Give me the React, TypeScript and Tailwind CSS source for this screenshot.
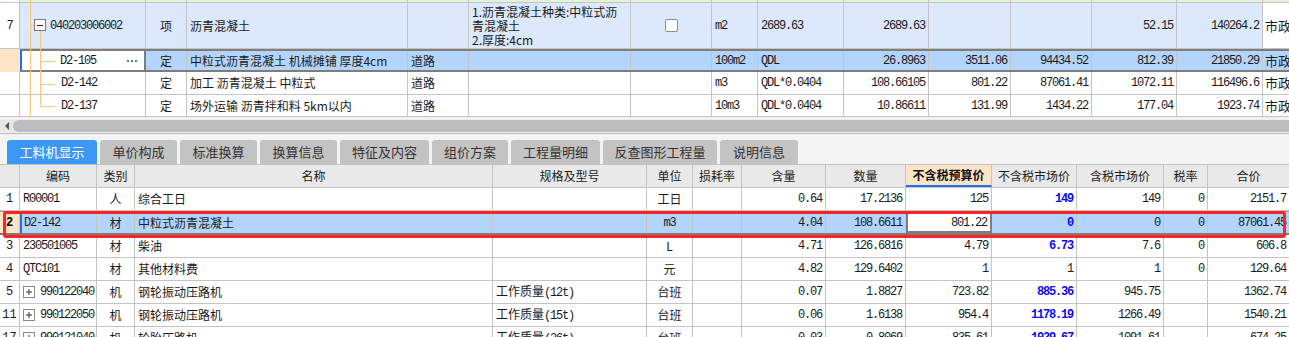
import React from "react";
import clsx from "clsx";
import { twMerge } from "tailwind-merge";

const cjk = "font-['Noto_Sans_CJK_SC',sans-serif] text-[12px]";
const mono = "font-['Liberation_Mono','Noto_Sans_CJK_SC',monospace] text-[12px] tracking-[-1.2px]";

// top grid column widths
const TW = [
  "w-[20px]", "w-[126px]", "w-[41px]", "w-[221px]", "w-[61px]", "w-[162px]", "w-[81px]",
  "w-[46px]", "w-[86px]", "w-[85px]", "w-[82px]", "w-[81px]", "w-[85px]", "w-[86px]", "w-[40px]",
];

// bottom grid column widths
const BW = [
  "w-[20px]", "w-[77px]", "w-[38px]", "w-[358px]", "w-[154px]", "w-[46px]", "w-[49px]",
  "w-[84px]", "w-[80px]", "w-[86px]", "w-[85px]", "w-[87px]", "w-[44px]", "w-[81px]",
];

function Cell({
  w,
  children,
  cls = "",
  num = false,
}: {
  w: string;
  children?: React.ReactNode;
  cls?: string;
  num?: boolean;
}) {
  return (
    <div
      className={twMerge(
        clsx(
          "shrink-0 h-full flex items-center border-r border-[#c4c4c4] overflow-hidden whitespace-nowrap text-[#1a1a1a]",
          w,
          num ? mono : cjk,
          cls
        )
      )}
    >
      {children}
    </div>
  );
}

const L = "pl-[3px]";
const R = "justify-end pr-[3px]";
const C = "justify-center";

function Dots() {
  return (
    <span className="flex gap-[2px] ml-auto mr-[7px]">
      <span className="w-[2px] h-[2px] bg-[#3b82d6]" />
      <span className="w-[2px] h-[2px] bg-[#3b82d6]" />
      <span className="w-[2px] h-[2px] bg-[#3b82d6]" />
    </span>
  );
}

function PlusBox() {
  return (
    <svg width="12" height="12" viewBox="0 0 12 12" className="mr-[5px] shrink-0">
      <rect x="0.5" y="0.5" width="11" height="11" fill="#fff" stroke="#8a8a8a" />
      <path d="M3 6h6M6 3v6" stroke="#333" strokeWidth="1" />
    </svg>
  );
}

function TreeLines() {
  return (
    <svg
      width="126"
      height="117"
      viewBox="0 0 126 117"
      className="absolute left-[20px] top-0 pointer-events-none"
    >
      <g stroke="#f8c67c" strokeWidth="1" fill="none">
        <path d="M10.5 0V117" />
        <path d="M20.5 31V106.5" />
        <path d="M10 25.5H14" />
        <path d="M20 61.5H35" />
        <path d="M20 84.5H35" />
        <path d="M20 106.5H35" />
      </g>
      <rect x="14.5" y="19.5" width="11" height="11" fill="#fff" stroke="#7a7a7a" />
      <path d="M17 25.5H23" stroke="#222" strokeWidth="1" />
    </svg>
  );
}

function TopTable() {
  const plain = [
    {
      code: "D2-142",
      name: "加工 沥青混凝土 中粒式",
      unit: "m3",
      expr: "QDL*0.0404",
      v: ["108.66105", "801.22", "87061.41", "1072.11", "116496.6"],
      h: "h-[23px]",
    },
    {
      code: "D2-137",
      name: "场外运输 沥青拌和料 5km以内",
      unit: "10m3",
      expr: "QDL*0.0404",
      v: ["10.86611", "131.99", "1434.22", "177.04", "1923.74"],
      h: "h-[22px]",
    },
  ];
  return (
    <div className="relative">
      {/* strip of the row above */}
      <div className="flex h-[3px] bg-[#e4f2d8] border-b border-[#c4c4c4]">
        {TW.map((w, i) => (
          <Cell key={i} w={w} cls={i === 0 ? "bg-white" : ""} />
        ))}
      </div>

      {/* row 7 */}
      <div className="flex h-[46px] bg-[#dce8fb] border-b border-[#c4c4c4]">
        <Cell w={TW[0]} num cls={clsx(C, "bg-white")}>7</Cell>
        <Cell w={TW[1]} num cls="pl-[30px]">040203006002</Cell>
        <Cell w={TW[2]} cls={C}>项</Cell>
        <Cell w={TW[3]} cls={L}>沥青混凝土</Cell>
        <Cell w={TW[4]} />
        <Cell w={TW[5]} cls={clsx(L, "whitespace-normal leading-[14px]")}>
          <span>
            1.沥青混凝土种类:中粒式沥
            <br />
            青混凝土
            <br />
            2.厚度:4cm
          </span>
        </Cell>
        <Cell w={TW[6]} cls={C}>
          <span className="w-[13px] h-[13px] bg-white border border-[#8c8c8c] rounded-[2px]" />
        </Cell>
        <Cell w={TW[7]} num cls={L}>m2</Cell>
        <Cell w={TW[8]} num cls={L}>2689.63</Cell>
        <Cell w={TW[9]} num cls={R}>2689.63</Cell>
        <Cell w={TW[10]} />
        <Cell w={TW[11]} />
        <Cell w={TW[12]} num cls={R}>52.15</Cell>
        <Cell w={TW[13]} num cls={R}>140264.2</Cell>
        <Cell w={TW[14]} cls="pl-[2px] bg-white border-r-0 text-[13px]">市政</Cell>
      </div>

      {/* selected D2-105 */}
      <div className="flex h-[23px]">
        <Cell w={TW[0]} cls="bg-[#fde4c6] border-r-0" />
        <Cell
          w={TW[1]}
          num
          cls="bg-white border-2 border-[#7d7d7d] border-l-[#1f6ff2] pl-[38px]"
        >
          D2-105
          <Dots />
        </Cell>
        <div className="flex flex-1 h-full bg-[#b4d5fb] border-y-2 border-[#7d7d7d]">
          <Cell w={TW[2]} cls={C}>定</Cell>
          <Cell w={TW[3]} cls={L}>中粒式沥青混凝土 机械摊铺 厚度4cm</Cell>
          <Cell w={TW[4]} cls={L}>道路</Cell>
          <Cell w={TW[5]} />
          <Cell w={TW[6]} />
          <Cell w={TW[7]} num cls={L}>100m2</Cell>
          <Cell w={TW[8]} num cls={L}>QDL</Cell>
          <Cell w={TW[9]} num cls={R}>26.8963</Cell>
          <Cell w={TW[10]} num cls={R}>3511.06</Cell>
          <Cell w={TW[11]} num cls={R}>94434.52</Cell>
          <Cell w={TW[12]} num cls={R}>812.39</Cell>
          <Cell w={TW[13]} num cls={R}>21850.29</Cell>
          <Cell w={TW[14]} cls="pl-[2px] border-r-0 text-[13px]">市政</Cell>
        </div>
      </div>

      {plain.map((r) => (
        <div key={r.code} className={clsx("flex bg-white border-b border-[#c4c4c4]", r.h)}>
          <Cell w={TW[0]} />
          <Cell w={TW[1]} num cls="pl-[41px]">{r.code}</Cell>
          <Cell w={TW[2]} cls={C}>定</Cell>
          <Cell w={TW[3]} cls={L}>{r.name}</Cell>
          <Cell w={TW[4]} cls={L}>道路</Cell>
          <Cell w={TW[5]} />
          <Cell w={TW[6]} />
          <Cell w={TW[7]} num cls={L}>{r.unit}</Cell>
          <Cell w={TW[8]} num cls={L}>{r.expr}</Cell>
          {r.v.map((v, i) => (
            <Cell key={i} w={TW[9 + i]} num cls={R}>{v}</Cell>
          ))}
          <Cell w={TW[14]} cls="pl-[2px] border-r-0 text-[13px]">市政</Cell>
        </div>
      ))}

      <TreeLines />
    </div>
  );
}

function ScrollBar() {
  return (
    <div className="bg-[#f0f0f0]">
      <div className="h-[3px]" />
      <div className="flex h-[12px] items-center bg-[#e6e6e6]">
        <div className="w-[13px] flex justify-center">
          <span className="w-0 h-0 border-y-[4px] border-y-transparent border-r-[4px] border-r-[#555]" />
        </div>
        <div className="flex-1 h-full bg-[#bdbdbd] rounded-l-[6px]" />
      </div>
      <div className="h-[1px]" />
      <div className="h-[1px] bg-[#bababa]" />
    </div>
  );
}

const TABS: [string, string][] = [
  ["工料机显示", "w-[90px]"],
  ["单价构成", "w-[77px]"],
  ["标准换算", "w-[77px]"],
  ["换算信息", "w-[77px]"],
  ["特征及内容", "w-[89px]"],
  ["组价方案", "w-[76px]"],
  ["工程量明细", "w-[89px]"],
  ["反查图形工程量", "w-[114px]"],
  ["说明信息", "w-[78px]"],
];

function Tabs() {
  return (
    <div className="flex items-end gap-[3px] h-[30px] pl-[7px] bg-[#f4f4f4]">
      {TABS.map(([t, w], i) => (
        <div
          key={t}
          className={clsx(
            "h-[24px] flex items-center justify-center rounded-t-[3px] text-[13px] font-['Noto_Sans_CJK_SC',sans-serif]",
            w,
            i === 0 ? "bg-[#3d97f7] text-white" : "bg-[#c3c3c3] text-[#333]"
          )}
        >
          {t}
        </div>
      ))}
    </div>
  );
}

const HEAD = [
  "", "编码", "类别", "名称", "规格及型号", "单位", "损耗率", "含量", "数量",
  "不含税预算价", "不含税市场价", "含税市场价", "税率", "合价",
];

type BRow = {
  no: string;
  code: string;
  plus?: boolean;
  kind: string;
  name: string;
  spec: string;
  unit: string;
  qty: string;
  amount: string;
  budget: string;
  market: string;
  blue: boolean;
  taxMarket: string;
  tax: string;
  total: string;
};

const ROWS: BRow[] = [
  { no: "1", code: "R00001", kind: "人", name: "综合工日", spec: "", unit: "工日", qty: "0.64", amount: "17.2136", budget: "125", market: "149", blue: true, taxMarket: "149", tax: "0", total: "2151.7" },
  { no: "3", code: "230501005", kind: "材", name: "柴油", spec: "", unit: "L", qty: "4.71", amount: "126.6816", budget: "4.79", market: "6.73", blue: true, taxMarket: "7.6", tax: "0", total: "606.8" },
  { no: "4", code: "QTC101", kind: "材", name: "其他材料费", spec: "", unit: "元", qty: "4.82", amount: "129.6402", budget: "1", market: "1", blue: false, taxMarket: "1", tax: "0", total: "129.64" },
  { no: "5", code: "990122040", plus: true, kind: "机", name: "钢轮振动压路机", spec: "(12t)", unit: "台班", qty: "0.07", amount: "1.8827", budget: "723.82", market: "885.36", blue: true, taxMarket: "945.75", tax: "", total: "1362.74" },
  { no: "11", code: "990122050", plus: true, kind: "机", name: "钢轮振动压路机", spec: "(15t)", unit: "台班", qty: "0.06", amount: "1.6138", budget: "954.4", market: "1178.19", blue: true, taxMarket: "1266.49", tax: "", total: "1540.21" },
  { no: "17", code: "990121040", plus: true, kind: "机", name: "轮胎压路机", spec: "(26t)", unit: "台班", qty: "0.03", amount: "0.8069", budget: "835.61", market: "1029.67", blue: true, taxMarket: "1091.61", tax: "", total: "674.25" },
];

function BodyRow({ r }: { r: BRow }) {
  return (
    <div className="flex h-[23px] bg-white border-b border-[#c4c4c4]">
      <Cell w={BW[0]} num cls={clsx(C, "tracking-normal")}>{r.no}</Cell>
      <Cell w={BW[1]} num cls={L}>
        {r.plus && <PlusBox />}
        {r.code}
      </Cell>
      <Cell w={BW[2]} cls={C}>{r.kind}</Cell>
      <Cell w={BW[3]} cls={L}>{r.name}</Cell>
      <Cell w={BW[4]} cls={L}>
        {r.spec && (
          <span>
            工作质量<span className={mono}>{r.spec}</span>
          </span>
        )}
      </Cell>
      <Cell w={BW[5]} cls={C}>{r.unit}</Cell>
      <Cell w={BW[6]} />
      <Cell w={BW[7]} num cls={R}>{r.qty}</Cell>
      <Cell w={BW[8]} num cls={R}>{r.amount}</Cell>
      <Cell w={BW[9]} num cls={R}>{r.budget}</Cell>
      <Cell w={BW[10]} num cls={clsx(R, r.blue && "font-bold text-[#0a0af5]")}>{r.market}</Cell>
      <Cell w={BW[11]} num cls={R}>{r.taxMarket}</Cell>
      <Cell w={BW[12]} num cls={R}>{r.tax}</Cell>
      <Cell w={BW[13]} num cls={clsx(R, "border-r-0")}>{r.total}</Cell>
    </div>
  );
}

function BottomTable() {
  return (
    <div>
      <div className="flex h-[24px] bg-[#e9e9e9] border-y border-[#c4c4c4]">
        {HEAD.map((h, i) => (
          <Cell
            key={i}
            w={BW[i]}
            cls={clsx(
              C,
              i === 9 && "bg-[#fde4c6] font-bold border-b-2 border-b-[#1f6ff2] text-[#111]",
              i === 13 && "border-r-0"
            )}
          >
            {h}
          </Cell>
        ))}
      </div>

      <BodyRow r={ROWS[0]} />

      {/* selected row 2 */}
      <div className="relative">
        <div className="flex h-[24px] bg-[#b4d5fb] border-t border-b-2 border-t-[#9a9a9a] border-b-[#7d7d7d]">
          <Cell w={BW[0]} num cls={clsx(C, "bg-[#fde4c6] font-bold tracking-normal text-black")}>2</Cell>
          <Cell w={BW[1]} num cls="border-l-2 border-l-[#1f6ff2] pl-[2px]">D2-142</Cell>
          <Cell w={BW[2]} cls={C}>材</Cell>
          <Cell w={BW[3]} cls={L}>中粒式沥青混凝土</Cell>
          <Cell w={BW[4]} />
          <Cell w={BW[5]} num cls={C}>m3</Cell>
          <Cell w={BW[6]} />
          <Cell w={BW[7]} num cls={R}>4.04</Cell>
          <Cell w={BW[8]} num cls={R}>108.6611</Cell>
          <Cell w={BW[9]} num cls={clsx(R, "bg-white border-2 border-[#7d7d7d]")}>801.22</Cell>
          <Cell w={BW[10]} num cls={clsx(R, "font-bold text-[#0a0af5]")}>0</Cell>
          <Cell w={BW[11]} num cls={R}>0</Cell>
          <Cell w={BW[12]} num cls={R}>0</Cell>
          <Cell w={BW[13]} num cls={clsx(R, "border-r-0")}>87061.45</Cell>
        </div>
        <div className="absolute top-[0px] -bottom-[3px] left-[3px] right-[3px] border-[3px] border-[#ff2424] rounded-[3px] pointer-events-none" />
      </div>

      {ROWS.slice(1).map((r) => (
        <BodyRow key={r.no} r={r} />
      ))}
    </div>
  );
}

export default function App() {
  return (
    <div className="w-[1289px] h-[337px] overflow-hidden bg-white">
      <TopTable />
      <ScrollBar />
      <Tabs />
      <BottomTable />
    </div>
  );
}
